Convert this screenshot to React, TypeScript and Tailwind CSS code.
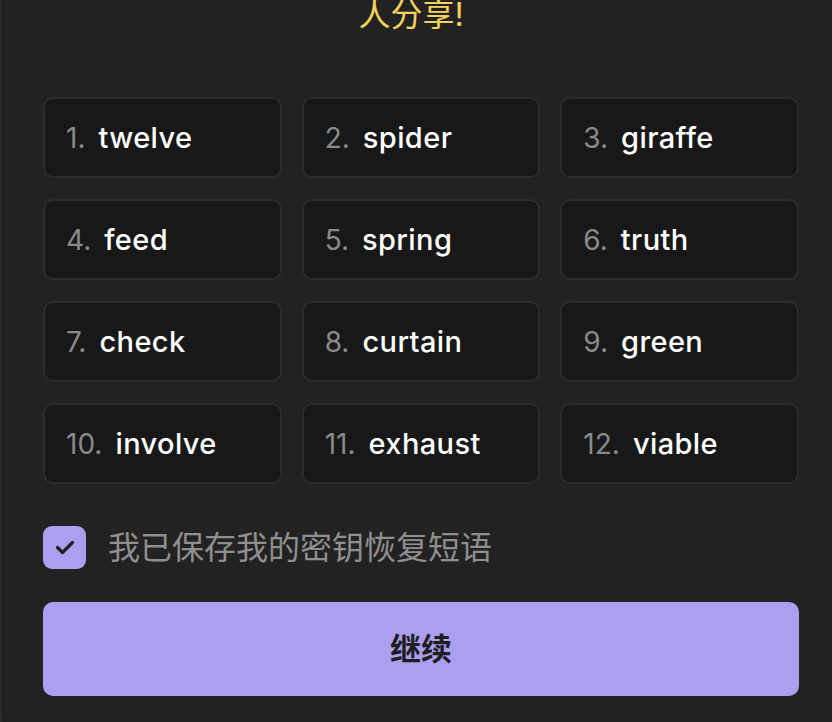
import React from 'react';

const words = [
  'twelve',
  'spider',
  'giraffe',
  'feed',
  'spring',
  'truth',
  'check',
  'curtain',
  'green',
  'involve',
  'exhaust',
  'viable'
];

function WordCard({ index, word }: { index: number; word: string }) {
  return (
    <div className="flex h-[81px] items-center gap-[13px] rounded-[10px] border-2 border-[#2c2c2c] bg-[#181818] pl-[21px]">
      <span className="text-[28px] font-normal text-[#8a8a8a]">{index}.</span>
      <span className="pt-[1px] text-[29px] font-medium tracking-[0.4px] text-white">{word}</span>
    </div>
  );
}

export default function App() {
  return (
    <div className="h-[722px] w-[832px] overflow-hidden border-l-2 border-[#2b2b2b] bg-[#222222] font-['Inter','Noto_Sans_CJK_SC',sans-serif]">
      <div className="h-full border-l border-[#1b1b1b] pl-[40px] pr-[33px]">
        <p className="-mt-[5px] pr-[20px] text-center text-[32px] leading-[40px] text-[#f5d25e]">人分享!</p>

        <div className="mt-[62px] grid grid-cols-3 gap-x-[20px] gap-y-[21px]">
          {words.map((word, i) => (
            <WordCard key={word} index={i + 1} word={word} />
          ))}
        </div>

        <label className="mt-[42px] flex items-center gap-[22px]">
          <span className="flex h-[43px] w-[43px] items-center justify-center rounded-[9px] bg-[#ab9ff2]">
            <svg width="20" height="15" viewBox="0 0 20 15" fill="none">
              <path
                d="M2.5 7.5 L7.5 12.5 L17.5 2.5"
                stroke="#222222"
                strokeWidth="3.2"
                strokeLinecap="round"
                strokeLinejoin="round"
              />
            </svg>
          </span>
          <span className="text-[32px] leading-[43px] text-[#8f8f8f]">我已保存我的密钥恢复短语</span>
        </label>

        <button className="mt-[33px] flex h-[94px] w-full items-center justify-center rounded-[10px] bg-[#ab9ff2] text-[31px] font-bold text-[#1e1e1e]">
          继续
        </button>
      </div>
    </div>
  );
}
